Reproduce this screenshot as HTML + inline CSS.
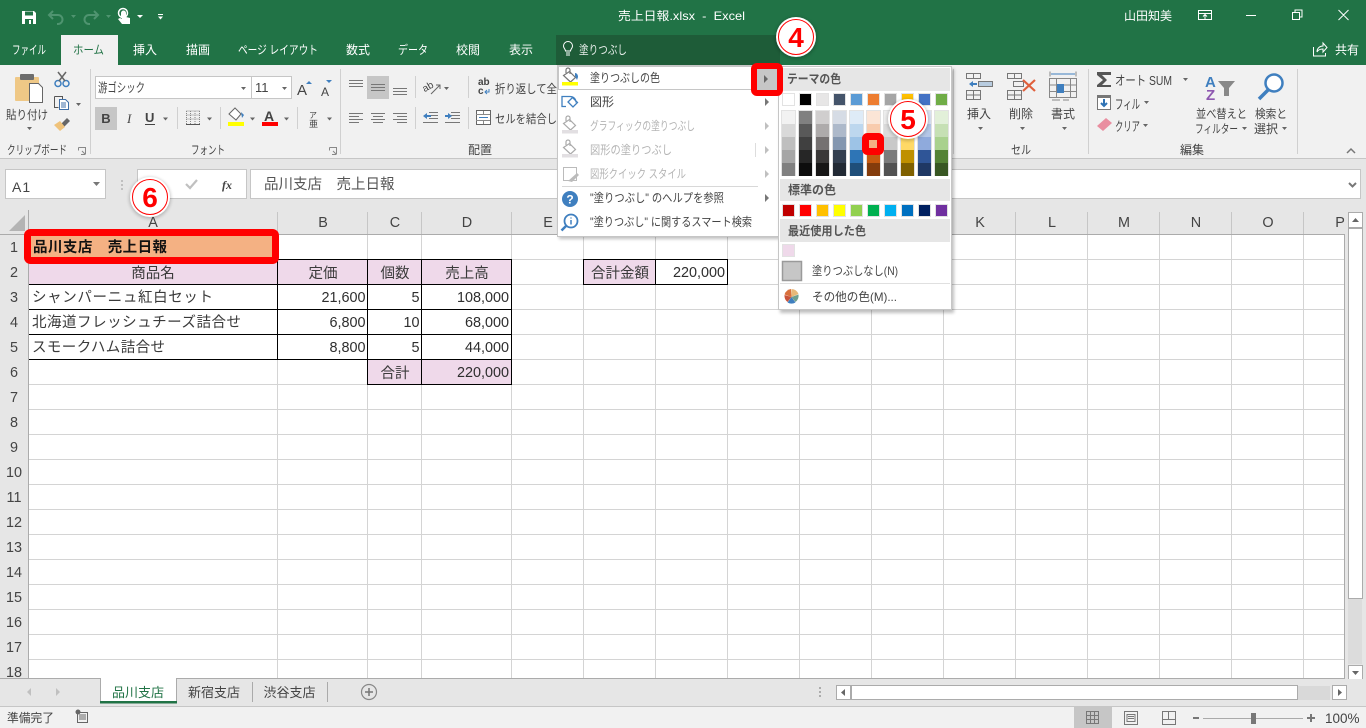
<!DOCTYPE html>
<html lang="ja"><head><meta charset="utf-8"><title>売上日報.xlsx - Excel</title>
<style>
html,body{margin:0;padding:0;background:#fff;width:1366px;height:728px;overflow:hidden}
svg{display:block;font-family:"Liberation Sans","Noto Sans CJK JP",sans-serif}
text{font-size:12px;fill:#444;white-space:pre}
.w{fill:#fff}.d{fill:#b4b4b4}.c{font-size:14.5px;fill:#3a3a3a;font-family:"Noto Sans CJK JP",sans-serif}
.n{font-size:14.4px;fill:#2e2e2e;text-anchor:end}.h{font-size:14.4px;fill:#444;text-anchor:middle}
.m{text-anchor:middle}
</style></head><body>
<svg width="1366" height="728" viewBox="0 0 1366 728" xmlns="http://www.w3.org/2000/svg">
<defs><filter id="s" x="-30%" y="-30%" width="160%" height="160%"><feGaussianBlur stdDeviation="1.500"/></filter></defs>
<rect width="1366" height="728" fill="#fff"/>
<!-- title bar -->
<rect width="1366" height="65" fill="#217346"/>
<path d="M22 11h12l2 2v11H22z" fill="#fff"/><rect x="25" y="11.500" width="8" height="4" fill="#217346"/><rect x="25" y="19" width="8" height="5" fill="#217346"/><rect x="29" y="20" width="2" height="4" fill="#fff"/>
<path d="M53 11l-4 4 4 4M50 15h8a4.500 4.500 0 0 1 0 9h-1" fill="none" stroke="#4f9470" stroke-width="2"/>
<path d="M94 11l4 4-4 4M97 15h-8a4.500 4.500 0 0 0 0 9h1" fill="none" stroke="#4f9470" stroke-width="2"/>
<path d="M71 15h5l-2.500 3zM106 15h5l-2.500 3z" fill="#4f9470"/>
<path d="M121 16v-3a2.500 2.500 0 0 1 5 0v4l4 1v6h-8l-4-5 2-1 2 1z" fill="#fff"/><circle cx="123" cy="13" r="4.500" fill="none" stroke="#fff" stroke-width="1.500"/>
<path d="M137 15h6l-3 3zM158 14h5v1h-5zM158 16.500h5l-2.500 3z" fill="#fff"/>
<text x="618" y="20" class="w" textLength="127" lengthAdjust="spacingAndGlyphs">売上日報.xlsx  -  Excel</text>
<text x="1124" y="20" class="w" textLength="48" lengthAdjust="spacingAndGlyphs">山田知美</text>
<path d="M1198.500 10.500h13v9h-13zM1198.500 13.500h13M1205 19v-4M1203 16.500l2-2 2 2M1246 15.500h10M1292.500 12.500h7v7h-7zM1295 12.500v-2.500h7v7h-2.500M1338.500 10l10 10M1348.500 10l-10 10" fill="none" stroke="#fff"/>
<!-- tabs -->
<rect x="61" y="35" width="57" height="30" fill="#f1f1f1"/>
<g class="tabs">
<text x="12" y="54" class="w" textLength="34" lengthAdjust="spacingAndGlyphs">ファイル</text>
<text x="73" y="54" style="fill:#217346" textLength="31" lengthAdjust="spacingAndGlyphs">ホーム</text>
<text x="133" y="54" class="w">挿入</text><text x="186" y="54" class="w">描画</text>
<text x="238" y="54" class="w" textLength="80" lengthAdjust="spacingAndGlyphs">ページ レイアウト</text>
<text x="346" y="54" class="w">数式</text><text x="398" y="54" class="w" textLength="30" lengthAdjust="spacingAndGlyphs">データ</text>
<text x="456" y="54" class="w">校閲</text><text x="509" y="54" class="w">表示</text>
<text x="1335" y="54" class="w">共有</text>
</g>
<path d="M1313.500 47v9h12v-3M1317 52c0-4 3-6 6-6v-3l4 4.500-4 4.500v-3c-3 0-5 1-6 3" fill="none" stroke="#fff"/>
<rect x="556" y="35" width="224" height="30" fill="#1e5c38"/>
<text x="579" y="54" class="w" fill-opacity=".9" textLength="48" lengthAdjust="spacingAndGlyphs">塗りつぶし</text>
<path d="M566 53h4M566 55h4M565.500 51c0-2-2-2.500-2-5a4.500 4.500 0 0 1 9 0c0 2.500-2 3-2 5z" fill="none" stroke="#fff"/>
<!-- ribbon -->
<rect y="65" width="1366" height="93" fill="#f1f1f1"/>
<rect y="158" width="1366" height="1" fill="#c6c6c6"/>
<rect y="159" width="1366" height="51" fill="#e6e6e6"/>
<path d="M90.500 69v85M340.500 69v85M953.500 69v85M1088.500 69v85M1297.500 69v85M177.500 107v22M220.500 107v22M297.500 107v22M415.500 76v22M415.500 107v22M468.500 76v22M468.500 107v22" stroke="#d0d0d0" fill="none"/>
<!-- clipboard group -->
<rect x="15" y="77" width="24" height="24" rx="1" fill="#efc886"/><rect x="20" y="74" width="14" height="6" rx="1" fill="#6d6d6d"/>
<path d="M29.500 83.500h9l4 4v15h-13z" fill="#fff" stroke="#666"/>
<text x="6" y="119" fill="#333" textLength="42" lengthAdjust="spacingAndGlyphs">貼り付け</text>
<path d="M27 127h5l-2.500 3zM76 103h5l-2.500 3zM163 117.500h5l-2.500 3zM207 117.500h5l-2.500 3zM250 117.500h5l-2.500 3zM284 117.500h5l-2.500 3zM327 117.500h5l-2.500 3zM444 87h5l-2.500 3zM978 127h5l-2.500 3zM1020 127h5l-2.500 3zM1062 127h5l-2.500 3zM1183 78h5l-2.500 3zM1144 101h5l-2.500 3zM1143 124h5l-2.500 3zM1242 127h5l-2.500 3zM1282 127h5l-2.500 3z" fill="#666"/>
<circle cx="58" cy="83.500" r="3" fill="none" stroke="#3f7fbf" stroke-width="1.500"/><circle cx="66" cy="83.500" r="3" fill="none" stroke="#3f7fbf" stroke-width="1.500"/><path d="M58 72l7 9M66 72l-7 9" stroke="#666" stroke-width="1.500"/>
<path d="M54.500 96.500h8l0 3M54.500 96.500v11h4" fill="none" stroke="#555"/><path d="M59.500 99.500h6l3 3v7h-9z" fill="#fff" stroke="#3f6fa8"/><path d="M61 103h5M61 105h5M61 107h5" stroke="#3f6fa8"/>
<path d="M60 125l7-7 3 3-7 7z" fill="#666"/><path d="M54 125l6-4 5 6-5 4z" fill="#efc27a"/>
<text x="7" y="154" fill="#333" textLength="60" lengthAdjust="spacingAndGlyphs">クリップボード</text>
<path d="M78.500 147.500h7v7M78.500 147.500v3M82 151l3 3M81 154.500h4" fill="none" stroke="#888"/><path d="M329.500 147.500h7v7M329.500 147.500v3M333 151l3 3M332 154.500h4" fill="none" stroke="#888"/>
<text x="191" y="154" fill="#333" textLength="34" lengthAdjust="spacingAndGlyphs">フォント</text>
<!-- font boxes -->
<rect x="95.500" y="76.500" width="156" height="22" fill="#fff" stroke="#c6c6c6"/><rect x="251.500" y="76.500" width="40" height="22" fill="#fff" stroke="#c6c6c6"/>
<text x="98" y="92" style="font-size:12.500px" fill="#333" textLength="47" lengthAdjust="spacingAndGlyphs">游ゴシック</text>
<text x="255" y="92" style="font-size:13px">11</text>
<path d="M241 87h5l-2.500 3zM282 87h5l-2.500 3z" fill="#666"/>
<text x="297" y="95" style="font-size:15px">A</text><text x="321" y="96" style="font-size:12px">A</text>
<path d="M306 84l3-3 3 3z" fill="#3f7fbf"/><path d="M326 80h6l-3 3z" fill="#3f7fbf"/>
<rect x="95" y="107" width="22" height="23" fill="#c6c6c6"/>
<text x="106" y="123" class="m" style="font-size:13px;font-weight:bold">B</text>
<text x="127" y="123" style="font-size:13px;font-style:italic;font-family:'Liberation Serif',serif">I</text>
<text x="145" y="122" style="font-size:13px;font-weight:bold">U</text><rect x="145" y="124" width="10" height="1" fill="#444"/>
<path d="M186.500 111h13M186.500 115h13M186.500 119h13M186.500 111v13M190.500 111v13M195 111v13M199.500 111v13" stroke="#888" stroke-dasharray="1 1" fill="none"/><rect x="186" y="124" width="14" height="1" fill="#555"/>
<path d="M229 114l6-6 6 6-5 6z" fill="#fff" stroke="#666"/><path d="M241 112l3 3-2 3z" fill="#3f7fbf"/><rect x="228" y="122" width="16" height="4" fill="#ff0"/>
<text x="264" y="121" style="font-size:14px;font-weight:bold">A</text><rect x="262" y="122" width="16" height="4" fill="#f00"/>
<text x="309" y="118" style="font-size:8px">ア</text><text x="309" y="127" style="font-size:9px">亜</text>
<!-- alignment -->
<rect x="367" y="76" width="22" height="23" fill="#c6c6c6"/>
<path d="M349 80.500h14M349 83.500h14M349 86.500h14M371 84.500h14M371 87.500h14M371 90.500h14M393 88.500h14M393 91.500h14M393 94.500h14M349 113.500h14M349 116.500h10M349 119.500h14M349 122.500h10M371 113.500h14M373 116.500h10M371 119.500h14M373 122.500h10M393 113.500h14M397 116.500h10M393 119.500h14M397 122.500h10" stroke="#777"/>
<text x="423" y="90" style="font-size:10px" transform="rotate(-30 428 88)">ab</text><path d="M431 94l9-9M436 85h4v4" fill="none" stroke="#666"/>
<path d="M429 112.500h9M429 115.500h9M429 118.500h9M423 122.500h15M451 112.500h9M451 115.500h9M451 118.500h9M445 122.500h15" stroke="#777"/>
<path d="M423 116l4-3v2h4v2h-4v2zM452 116l-4-3v2h-3v2h3v2z" fill="#3f7fbf"/>
<text x="478" y="85" style="font-size:10px;font-weight:bold">ab</text><text x="478" y="94" style="font-size:10px;font-weight:bold">c</text><path d="M489 89v3h-4M487 90l-2 2 2 2" fill="none" stroke="#3f7fbf"/>
<text x="495" y="93" fill="#333" textLength="62" lengthAdjust="spacingAndGlyphs">折り返して全</text>
<rect x="476.500" y="110.500" width="14" height="14" fill="#fff" stroke="#666"/><path d="M476 114.500h14M476 120.500h14M483.500 111v3M483.500 121v3" stroke="#888"/><path d="M479 117.500h9" stroke="#3f7fbf"/>
<text x="495" y="123" fill="#333" textLength="62" lengthAdjust="spacingAndGlyphs">セルを結合し</text>
<text x="468" y="154" fill="#333">配置</text>
<!-- cells group -->
<path d="M966.500 73.500h14v5h-14zM973.500 73.500v5M978.500 81.500h14v5h-14zM985.500 81.500v5M966.500 90.500h14v9h-14zM966.500 95h14M973.500 90.500v9" fill="none" stroke="#777"/><path d="M969 84l4-3v2h4v2h-4v2z" fill="#3f7fbf"/><rect x="979" y="82" width="13" height="4" fill="#b8cce0"/>
<path d="M1007.500 73.500h14v5h-14zM1014.500 73.500v5M1007.500 90.500h14v9h-14zM1007.500 95h14M1014.500 90.500v9M1013.500 81.500h10v5h-10z" fill="none" stroke="#777"/><path d="M1023 80l12 11M1035 80l-12 11" stroke="#e0603c" stroke-width="2.200"/>
<path d="M1049.500 78.500h27v19h-27zM1056.500 78.500v19M1070.500 78.500v19M1049.500 85h27M1049.500 91.500h27M1050 71.500v5M1076 71.500v5M1052 100h8M1063 100h6" fill="none" stroke="#888"/><path d="M1051 74h24" stroke="#3f7fbf"/><rect x="1057" y="84" width="7" height="9" fill="#3f7fbf"/>
<text x="967" y="118" fill="#333">挿入</text><text x="1009" y="118" fill="#333">削除</text><text x="1051" y="118" fill="#333">書式</text><text x="1011" y="154" fill="#333" textLength="20" lengthAdjust="spacingAndGlyphs">セル</text>
<!-- editing -->
<path d="M1097 72h14v3h-9l5 5-5 5h9v2h-14v-2l6-5-6-5z" fill="#555"/>
<text x="1115" y="85" style="font-size:13px" fill="#333" textLength="57" lengthAdjust="spacingAndGlyphs">オート SUM</text>
<rect x="1097.500" y="95.500" width="13" height="14" fill="#fff" stroke="#777"/><rect x="1097" y="95" width="14" height="3" fill="#777"/><path d="M1104 99v7M1101 103l3 3 3-3" fill="none" stroke="#2f73b5" stroke-width="2"/>
<text x="1115" y="109" style="font-size:13px" fill="#333" textLength="25" lengthAdjust="spacingAndGlyphs">フィル</text>
<path d="M1097 126l9-8 6 5-9 8z" fill="#e98ea0"/>
<text x="1115" y="131" style="font-size:13px" fill="#333" textLength="25" lengthAdjust="spacingAndGlyphs">クリア</text>
<text x="1205" y="87" style="font-size:15px;font-weight:bold;fill:#3f7fbf">A</text><text x="1206" y="100" style="font-size:15px;font-weight:bold;fill:#8e58b0">Z</text>
<path d="M1218 81h17l-6 7v8h-5v-8z" fill="#888"/>
<text x="1196" y="118" fill="#333" textLength="51" lengthAdjust="spacingAndGlyphs">並べ替えと</text><text x="1195" y="133" fill="#333" textLength="43" lengthAdjust="spacingAndGlyphs">フィルター</text>
<circle cx="1274" cy="83" r="8.500" fill="#fff" stroke="#3f7fbf" stroke-width="2.500"/><path d="M1268 90l-9 9" stroke="#3f7fbf" stroke-width="3.500"/>
<text x="1255" y="118" fill="#333" textLength="32" lengthAdjust="spacingAndGlyphs">検索と</text><text x="1254" y="133" fill="#333" textLength="24" lengthAdjust="spacingAndGlyphs">選択</text>
<text x="1180" y="154" fill="#333">編集</text>
<path d="M1347 153l4-4 4 4" fill="none" stroke="#777" stroke-width="1.500"/>
<!-- formula bar -->
<rect x="5.500" y="169.500" width="100" height="29" fill="#fff" stroke="#c6c6c6"/>
<text x="12" y="192" style="font-size:14px" fill="#555" letter-spacing="1">A1</text><path d="M93 182h7l-3.500 4z" fill="#777"/>
<path d="M122 180v2M122 184v2M122 188v2" stroke="#999"/>
<rect x="137.500" y="169.500" width="109" height="29" fill="#fff" stroke="#c6c6c6"/>
<path d="M186 184l4 4 7-8" fill="none" stroke="#c0c0c0" stroke-width="2.200"/>
<text x="222" y="189" style="font-size:12px;font-style:italic;font-weight:bold;font-family:'Liberation Serif',serif">fx</text>
<rect x="250.500" y="169.500" width="1110" height="29" fill="#fff" stroke="#c6c6c6"/>
<text x="264" y="189" style="font-size:14.500px;fill:#555">品川支店　売上日報</text>
<path d="M1349 183l3.500 3.500 3.500-3.500" fill="none" stroke="#777" stroke-width="2"/>
<!-- headers -->
<rect y="210" width="1366" height="25" fill="#e6e6e6"/><rect y="235" width="29" height="444" fill="#e6e6e6"/>
<rect y="234" width="1345" height="1" fill="#ababab"/><rect x="28" y="210" width="1" height="469" fill="#ababab"/>
<path d="M25 215v16H9z" fill="#b4b4b4"/>
<path d="M277.500 212v22M367.500 212v22M421.500 212v22M511.500 212v22M583.500 212v22M655.500 212v22M727.500 212v22M799.500 212v22M871.500 212v22M943.500 212v22M1015.500 212v22M1087.500 212v22M1159.500 212v22M1231.500 212v22M1303.500 212v22" stroke="#c6c6c6"/>
<rect x="1344" y="235" width="22" height="444" fill="#e6e6e6"/>
<rect x="1344" y="234" width="1" height="445" fill="#ababab"/>
<g class="hd">
<text x="153" y="227" class="h">A</text><text x="323" y="227" class="h">B</text><text x="395" y="227" class="h">C</text><text x="467" y="227" class="h">D</text><text x="548" y="227" class="h">E</text><text x="980" y="227" class="h">K</text><text x="1052" y="227" class="h">L</text><text x="1124" y="227" class="h">M</text><text x="1196" y="227" class="h">N</text><text x="1268" y="227" class="h">O</text><text x="1340" y="227" class="h">P</text>
<text x="14" y="252" class="h">1</text><text x="14" y="277" class="h">2</text><text x="14" y="302" class="h">3</text><text x="14" y="327" class="h">4</text><text x="14" y="352" class="h">5</text><text x="14" y="377" class="h">6</text><text x="14" y="402" class="h">7</text><text x="14" y="427" class="h">8</text><text x="14" y="452" class="h">9</text><text x="14" y="477" class="h">10</text><text x="14" y="502" class="h">11</text><text x="14" y="527" class="h">12</text><text x="14" y="552" class="h">13</text><text x="14" y="577" class="h">14</text><text x="14" y="602" class="h">15</text><text x="14" y="627" class="h">16</text><text x="14" y="652" class="h">17</text><text x="14" y="677" class="h">18</text>
</g>
<!-- gridlines -->
<path d="M29 259.500H1344M29 284.500H1344M29 309.500H1344M29 334.500H1344M29 359.500H1344M29 384.500H1344M29 409.500H1344M29 434.500H1344M29 459.500H1344M29 484.500H1344M29 509.500H1344M29 534.500H1344M29 559.500H1344M29 584.500H1344M29 609.500H1344M29 634.500H1344M29 659.500H1344M277.500 235V678M367.500 235V678M421.500 235V678M511.500 235V678M583.500 235V678M655.500 235V678M727.500 235V678M799.500 235V678M871.500 235V678M943.500 235V678M1015.500 235V678M1087.500 235V678M1159.500 235V678M1231.500 235V678M1303.500 235V678" stroke="#d4d4d4" fill="none"/>
<!-- table -->
<rect x="29" y="260" width="482" height="24" fill="#efd9ea"/><rect x="368" y="360" width="143" height="24" fill="#efd9ea"/><rect x="584" y="260" width="71" height="24" fill="#efd9ea"/>
<path d="M29 259.500H511.500V384.500H367.500V259.500M421.500 259.500V384.500M277.500 259.500V359.500M29 284.500H511.500M29 309.500H511.500M29 334.500H511.500M29 359.500H511.500M583.500 259.500H727.500V284.500H583.500ZM655.500 259.500V284.500" fill="none" stroke="#000"/>
<text x="153" y="278" class="c" text-anchor="middle">商品名</text>
<text x="323" y="278" class="c" text-anchor="middle">定価</text><text x="395" y="278" class="c" text-anchor="middle">個数</text><text x="467" y="278" class="c" text-anchor="middle">売上高</text>
<text x="32" y="302" class="c" textLength="181">シャンパーニュ紅白セット</text>
<text x="32" y="327" class="c" textLength="209">北海道フレッシュチーズ詰合せ</text>
<text x="32" y="352" class="c" textLength="133">スモークハム詰合せ</text>
<text x="365.500" y="302" class="n">21,600</text><text x="365.500" y="327" class="n">6,800</text><text x="365.500" y="352" class="n">8,800</text>
<text x="419.500" y="302" class="n">5</text><text x="419.500" y="327" class="n">10</text><text x="419.500" y="352" class="n">5</text>
<text x="509" y="302" class="n">108,000</text><text x="509" y="327" class="n">68,000</text><text x="509" y="352" class="n">44,000</text><text x="509" y="377" class="n">220,000</text>
<text x="395" y="378" class="c" text-anchor="middle">合計</text>
<text x="591" y="278" class="c">合計金額</text><text x="725" y="277" class="n">220,000</text>
<!-- selected A1 -->
<rect x="27.500" y="232.500" width="248" height="28" rx="3" fill="#f4b183" stroke="#f00" stroke-width="7"/>
<text x="33" y="252" style="font-size:14.500px;font-weight:bold;fill:#111;font-family:'Noto Sans CJK JP',sans-serif" textLength="134">品川支店　売上日報</text>
<!-- scrollbars right -->
<rect x="1348" y="228" width="14" height="436" fill="#dcdcdc"/>
<rect x="1348.500" y="212.500" width="14" height="15" fill="#fff" stroke="#ababab"/><path d="M1352 222l3.500-4 3.500 4z" fill="#666"/>
<rect x="1348.500" y="228.500" width="14" height="370" fill="#fff" stroke="#ababab"/>
<rect x="1348.500" y="665.500" width="14" height="14" fill="#fff" stroke="#ababab"/><path d="M1352 671l3.500 4 3.500-4z" fill="#666"/>
<!-- sheet tabs -->
<rect y="679" width="1366" height="27" fill="#e6e6e6"/><rect y="678" width="1345" height="1" fill="#ababab"/>
<rect y="706" width="1366" height="1" fill="#c6c6c6"/><rect y="707" width="1366" height="21" fill="#f1f1f1"/>
<path d="M31 688v8l-4-4zM56 688v8l4-4z" fill="#c0c0c0"/>
<rect x="101" y="678" width="75" height="23" fill="#fff"/>
<path d="M100.500 678v24M176.500 678v24" stroke="#ababab"/><rect x="100" y="701" width="77" height="2.500" fill="#217346"/>
<text x="138" y="697" class="m" style="font-size:13px;fill:#217346">品川支店</text><text x="214" y="697" class="m" style="font-size:13px">新宿支店</text><text x="289.500" y="697" class="m" style="font-size:13px">渋谷支店</text>
<path d="M252.500 682v20M327.500 682v20" stroke="#aaa"/>
<circle cx="369" cy="692" r="7.500" fill="none" stroke="#888" stroke-width="1.200"/><path d="M365 692h8M369 688v8" stroke="#777" stroke-width="1.500"/>
<path d="M820 687v2M820 691v2M820 695v2" stroke="#999" stroke-width="1.500"/>
<rect x="851" y="686" width="479" height="14" fill="#d9d9d9"/>
<rect x="836.500" y="685.500" width="14" height="14" fill="#fff" stroke="#ababab"/><path d="M845 689v7l-4-3.500z" fill="#666"/>
<rect x="851.500" y="685.500" width="446" height="14" fill="#fff" stroke="#ababab"/>
<rect x="1332.500" y="685.500" width="14" height="14" fill="#fff" stroke="#ababab"/><path d="M1338 689v7l4-3.500z" fill="#666"/>
<!-- status -->
<text x="7" y="722" fill="#333" textLength="47" lengthAdjust="spacingAndGlyphs">準備完了</text>
<circle cx="78" cy="712" r="2.500" fill="#666"/><rect x="77.500" y="712.500" width="10" height="10" fill="none" stroke="#666"/><path d="M79 715h7M79 717h7M79 719h7" stroke="#666"/>
<rect x="1074" y="707" width="38" height="21" fill="#c6c6c6"/>
<path d="M1086.500 711.500h12v12h-12zM1086.500 715.500h12M1086.500 719.500h12M1090.500 711.500v12M1094.500 711.500v12M1124.500 711.500h13v13h-13zM1127 714.500h8v7h-8zM1128 716.500h6M1128 718.500h6M1162.500 711.500h13v13h-13zM1162.500 719.500h6v-8M1168.500 719.500h7" fill="none" stroke="#777"/>
<path d="M1193 717h6v2h-6zM1307 717h8v2h-8zM1310 714h2v8h-2z" fill="#777"/><rect x="1203" y="718" width="100" height="1" fill="#aaa"/><rect x="1251" y="713" width="5" height="11" fill="#777"/>
<text x="1325" y="723" style="font-size:13.500px">100%</text>
<!-- tell-me dropdown -->
<rect x="559" y="68" width="221" height="171" fill="#000" opacity=".25" filter="url(#s)"/>
<rect x="557.500" y="65.500" width="221" height="171" fill="#fff" stroke="#c6c6c6"/>
<rect x="558.500" y="66.500" width="198" height="23" fill="#fff" stroke="#c6c6c6"/>
<path d="M562 186.500h196" stroke="#d8d8d8"/>
<text x="590" y="82" textLength="70" lengthAdjust="spacingAndGlyphs">塗りつぶしの色</text>
<text x="590" y="106">図形</text>
<text x="590" y="130" class="d" textLength="105" lengthAdjust="spacingAndGlyphs">グラフィックの塗りつぶし</text>
<text x="590" y="154" class="d" textLength="82" lengthAdjust="spacingAndGlyphs">図形の塗りつぶし</text>
<text x="590" y="178" class="d" textLength="96" lengthAdjust="spacingAndGlyphs">図形クイック スタイル</text>
<text x="590" y="202" textLength="134" lengthAdjust="spacingAndGlyphs">"塗りつぶし" のヘルプを参照</text>
<text x="590" y="226" textLength="162" lengthAdjust="spacingAndGlyphs">"塗りつぶし" に関するスマート検索</text>
<path d="M765 98v8l4-4z" fill="#777"/><path d="M765 122v8l4-4zM765 146v8l4-4zM765 170v8l4-4z" fill="#c0c0c0"/><path d="M765 194v8l4-4z" fill="#777"/>
<path d="M755.500 143v14" stroke="#ddd"/>
<path d="M563.500 75.500l6-4 6 6-5 4.500zM566 73v-3a1.800 1.800 0 0 1 4 0v4" fill="none" stroke="#777" stroke-width="1.200"/><path d="M575 73c2 0 3 2 3 4l-1 3-2-4z" fill="#3f7fbf"/><rect x="562" y="82" width="16" height="3.500" fill="#ff0"/>
<path d="M566 106.500h-4v-10h8M570 96.500c3 0 6 2 6 6M568 102l4.500-4.500 5 5-4.500 4.500z" fill="none" stroke="#3f7fbf" stroke-width="1.300"/>
<path d="M563.500 123.500l6-4 6 6-5 4.500zM566 121v-3a1.800 1.800 0 0 1 4 0v4" fill="none" stroke="#aaa" stroke-width="1.200"/><rect x="562" y="130" width="16" height="3.500" fill="#e2dfe2"/>
<path d="M563.500 147.500l6-4 6 6-5 4.500zM566 145v-3a1.800 1.800 0 0 1 4 0v4" fill="none" stroke="#aaa" stroke-width="1.200"/><rect x="562" y="154" width="16" height="3.500" fill="#e2dfe2"/>
<path d="M563.500 167.500h13v13h-13z" fill="#fff" stroke="#bbb"/><path d="M568 181l9-8 2 2-7 7z" fill="#bbb"/>
<circle cx="570" cy="199" r="8" fill="#3f7fbf"/><text x="570" y="203.500" class="m w" style="font-size:12px;font-weight:bold">?</text>
<circle cx="571" cy="221" r="6.500" fill="#fff" stroke="#3f7fbf" stroke-width="1.800"/><path d="M566 226l-4.500 4.500" stroke="#3f7fbf" stroke-width="2.500"/><path d="M571 217.500v1M571 220v4.500" stroke="#3f7fbf" stroke-width="1.500"/>
<!-- submenu -->
<rect x="780" y="69" width="174" height="244" fill="#000" opacity=".25" filter="url(#s)"/>
<rect x="778.500" y="66.500" width="173" height="243" fill="#fff" stroke="#c6c6c6"/>
<rect x="780" y="68" width="170" height="23" fill="#e6e6e6"/><rect x="780" y="179" width="170" height="22" fill="#e6e6e6"/><rect x="780" y="219" width="170" height="23" fill="#e6e6e6"/>
<text x="787" y="83" style="font-weight:bold;fill:#555" textLength="54" lengthAdjust="spacingAndGlyphs">テーマの色</text>
<text x="788" y="194" style="font-weight:bold;fill:#555">標準の色</text>
<text x="788" y="235" style="font-weight:bold;fill:#555" textLength="78" lengthAdjust="spacingAndGlyphs">最近使用した色</text>
<g stroke="#e2e2e2" stroke-width="1">
<rect x="782.500" y="93.500" width="12" height="12" fill="#fff"/><rect x="799.500" y="93.500" width="12" height="12" fill="#000"/><rect x="816.500" y="93.500" width="12" height="12" fill="#e7e6e6"/><rect x="833.500" y="93.500" width="12" height="12" fill="#44546a"/><rect x="850.500" y="93.500" width="12" height="12" fill="#5b9bd5"/><rect x="867.500" y="93.500" width="12" height="12" fill="#ed7d31"/><rect x="884.500" y="93.500" width="12" height="12" fill="#a5a5a5"/><rect x="901.500" y="93.500" width="12" height="12" fill="#ffc000"/><rect x="918.500" y="93.500" width="12" height="12" fill="#4472c4"/><rect x="935.500" y="93.500" width="12" height="12" fill="#70ad47"/>
<rect x="782.500" y="204.500" width="12" height="12" fill="#c00000"/><rect x="799.500" y="204.500" width="12" height="12" fill="#f00"/><rect x="816.500" y="204.500" width="12" height="12" fill="#ffc000"/><rect x="833.500" y="204.500" width="12" height="12" fill="#ff0"/><rect x="850.500" y="204.500" width="12" height="12" fill="#92d050"/><rect x="867.500" y="204.500" width="12" height="12" fill="#00b050"/><rect x="884.500" y="204.500" width="12" height="12" fill="#00b0f0"/><rect x="901.500" y="204.500" width="12" height="12" fill="#0070c0"/><rect x="918.500" y="204.500" width="12" height="12" fill="#002060"/><rect x="935.500" y="204.500" width="12" height="12" fill="#7030a0"/>
<rect x="782.500" y="244.500" width="12" height="12" fill="#efd9ea"/>
<rect x="781.500" y="110.500" width="14" height="65" fill="none"/><rect x="798.500" y="110.500" width="14" height="65" fill="none"/><rect x="815.500" y="110.500" width="14" height="65" fill="none"/><rect x="832.500" y="110.500" width="14" height="65" fill="none"/><rect x="849.500" y="110.500" width="14" height="65" fill="none"/><rect x="866.500" y="110.500" width="14" height="65" fill="none"/><rect x="883.500" y="110.500" width="14" height="65" fill="none"/><rect x="900.500" y="110.500" width="14" height="65" fill="none"/><rect x="917.500" y="110.500" width="14" height="65" fill="none"/><rect x="934.500" y="110.500" width="14" height="65" fill="none"/>
</g>
<g>
<rect x="782" y="111" width="13" height="13" fill="#f2f2f2"/><rect x="782" y="124" width="13" height="13" fill="#d9d9d9"/><rect x="782" y="137" width="13" height="13" fill="#bfbfbf"/><rect x="782" y="150" width="13" height="13" fill="#a6a6a6"/><rect x="782" y="163" width="13" height="13" fill="#808080"/>
<rect x="799" y="111" width="13" height="13" fill="#808080"/><rect x="799" y="124" width="13" height="13" fill="#595959"/><rect x="799" y="137" width="13" height="13" fill="#404040"/><rect x="799" y="150" width="13" height="13" fill="#262626"/><rect x="799" y="163" width="13" height="13" fill="#0d0d0d"/>
<rect x="816" y="111" width="13" height="13" fill="#d0cece"/><rect x="816" y="124" width="13" height="13" fill="#aeabab"/><rect x="816" y="137" width="13" height="13" fill="#757171"/><rect x="816" y="150" width="13" height="13" fill="#3a3838"/><rect x="816" y="163" width="13" height="13" fill="#171616"/>
<rect x="833" y="111" width="13" height="13" fill="#d6dce5"/><rect x="833" y="124" width="13" height="13" fill="#adb9ca"/><rect x="833" y="137" width="13" height="13" fill="#8497b0"/><rect x="833" y="150" width="13" height="13" fill="#333f50"/><rect x="833" y="163" width="13" height="13" fill="#222a35"/>
<rect x="850" y="111" width="13" height="13" fill="#deebf7"/><rect x="850" y="124" width="13" height="13" fill="#bdd7ee"/><rect x="850" y="137" width="13" height="13" fill="#9dc3e6"/><rect x="850" y="150" width="13" height="13" fill="#2e75b6"/><rect x="850" y="163" width="13" height="13" fill="#1f4e79"/>
<rect x="867" y="111" width="13" height="13" fill="#fbe5d6"/><rect x="867" y="124" width="13" height="13" fill="#f8cbad"/><rect x="867" y="137" width="13" height="13" fill="#f4b183"/><rect x="867" y="150" width="13" height="13" fill="#c55a11"/><rect x="867" y="163" width="13" height="13" fill="#843c0c"/>
<rect x="884" y="111" width="13" height="13" fill="#ededed"/><rect x="884" y="124" width="13" height="13" fill="#dbdbdb"/><rect x="884" y="137" width="13" height="13" fill="#c9c9c9"/><rect x="884" y="150" width="13" height="13" fill="#7b7b7b"/><rect x="884" y="163" width="13" height="13" fill="#525252"/>
<rect x="901" y="111" width="13" height="13" fill="#fff2cc"/><rect x="901" y="124" width="13" height="13" fill="#ffe699"/><rect x="901" y="137" width="13" height="13" fill="#ffd966"/><rect x="901" y="150" width="13" height="13" fill="#bf9000"/><rect x="901" y="163" width="13" height="13" fill="#7f6000"/>
<rect x="918" y="111" width="13" height="13" fill="#d9e2f3"/><rect x="918" y="124" width="13" height="13" fill="#b4c7e7"/><rect x="918" y="137" width="13" height="13" fill="#8faadc"/><rect x="918" y="150" width="13" height="13" fill="#2f5597"/><rect x="918" y="163" width="13" height="13" fill="#1f3864"/>
<rect x="935" y="111" width="13" height="13" fill="#e2f0d9"/><rect x="935" y="124" width="13" height="13" fill="#c6e0b4"/><rect x="935" y="137" width="13" height="13" fill="#a9d18e"/><rect x="935" y="150" width="13" height="13" fill="#548235"/><rect x="935" y="163" width="13" height="13" fill="#385723"/>
</g>
<rect x="782.500" y="261.500" width="19" height="19" fill="#c6c6c6" stroke="#9a9a9a" stroke-width="1.500"/>
<text x="812" y="275" textLength="86" lengthAdjust="spacingAndGlyphs">塗りつぶしなし(N)</text>
<path d="M780 283.500h170" stroke="#e0e0e0"/>
<path d="M791.500 297l0-8a8 8 0 0 1 7 5z" fill="#e8b878"/><path d="M791.500 297l-7-2.500a8 8 0 0 1 6.500-5.500z" fill="#d9703c"/><path d="M791.500 297l-7-2a8 8 0 0 0 3 7z" fill="#c9533a"/><path d="M791.500 297l-4 5.500a8 8 0 0 0 8 0z" fill="#3f7fbf"/><path d="M791.500 297l7-2.500a8 8 0 0 1-3 7.500z" fill="#6f9f8f"/>
<text x="812" y="301" textLength="85" lengthAdjust="spacingAndGlyphs">その他の色(M)...</text>
<!-- red highlights -->
<rect x="754" y="66" width="26" height="27" rx="3" fill="#c6c6c6" stroke="#f00" stroke-width="6"/>
<path d="M764 75v8l4-4z" fill="#666"/>
<rect x="865.500" y="136.500" width="15" height="15" rx="2" fill="#f4b183" stroke="#f00" stroke-width="7"/>
<!-- numbered circles -->
<g>
<circle cx="796" cy="38" r="21" fill="#000" opacity=".2" filter="url(#s)"/><circle cx="796" cy="37" r="20" fill="#fff"/><circle cx="796" cy="37" r="17.500" fill="none" stroke="#f00"/>
<text x="796" y="47" class="m" style="font-size:28px;font-weight:bold;fill:#f00">4</text>
<circle cx="908" cy="120" r="21" fill="#000" opacity=".2" filter="url(#s)"/><circle cx="908" cy="119" r="20" fill="#fff"/><circle cx="908" cy="119" r="17.500" fill="none" stroke="#f00"/>
<text x="908" y="129" class="m" style="font-size:28px;font-weight:bold;fill:#f00">5</text>
<circle cx="150" cy="198" r="21" fill="#000" opacity=".2" filter="url(#s)"/><circle cx="150" cy="197" r="20" fill="#fff"/><circle cx="150" cy="197" r="17.500" fill="none" stroke="#f00"/>
<text x="150" y="207" class="m" style="font-size:28px;font-weight:bold;fill:#f00">6</text>
</g>
</svg>
</body></html>
